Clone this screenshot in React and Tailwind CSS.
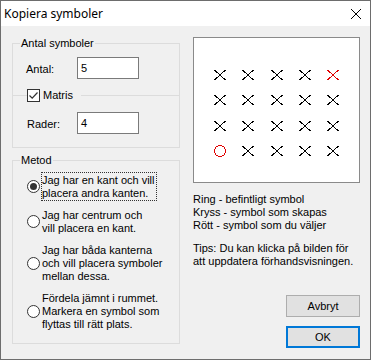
import React from "react";

const font = "font-['Liberation_Sans',Arial,sans-serif] text-[11px] leading-[13px]";

function Checkbox({ checked }) {
  return (
    <span className="w-[13px] h-[13px] border border-[#333] bg-white flex items-center justify-center">
      {checked && (
        <svg width="11" height="11" viewBox="0 0 11 11">
          <path d="M1.5 5.5 L4.2 8.2 L9.5 2.5" fill="none" stroke="#333" strokeWidth="1.2" />
        </svg>
      )}
    </span>
  );
}

function Radio({ checked, focused, lines, className = "" }) {
  return (
    <div className={`flex items-center pl-[14px] ${className}`}>
      <span className="w-[13px] h-[13px] rounded-full border border-[#333] bg-white flex items-center justify-center shrink-0">
        {checked && <span className="w-[7px] h-[7px] rounded-full bg-[#333]" />}
      </span>
      <div
        className={`ml-[1px] border pt-[1px] pr-[1px] ${
          focused ? "border-dotted border-[#333]" : "border-transparent"
        }`}
      >
        {lines.map((l) => (
          <div key={l}>{l}</div>
        ))}
      </div>
    </div>
  );
}

function Field({ value }) {
  return (
    <div className="w-[62px] h-[22px] border border-[#7a7a7a] bg-white flex items-center px-[3px]">
      {value}
    </div>
  );
}

function Preview() {
  const cols = [26, 54, 83, 111, 139];
  const rows = [37, 62, 88, 113];
  const marks = [];
  rows.forEach((y, r) =>
    cols.forEach((x, c) => {
      if (r === 3 && c === 0) return;
      const red = r === 0 && c === 4;
      marks.push(
        <g key={`${r}-${c}`} stroke={red ? "#e00000" : "#000"} strokeWidth="1">
          <line x1={x - 5.5} y1={y - 5} x2={x + 5.5} y2={y + 5} />
          <line x1={x + 5.5} y1={y - 5} x2={x - 5.5} y2={y + 5} />
        </g>
      );
    })
  );
  return (
    <div className="w-[167px] h-[146px] border border-[#8a8a8a] bg-white">
      <svg width="165" height="144" shapeRendering="crispEdges">
        {marks}
        <circle cx="26" cy="113" r="5.5" fill="none" stroke="#e00000" strokeWidth="1" />
      </svg>
    </div>
  );
}

export default function App() {
  return (
    <div className={`w-[371px] h-[360px] border border-[#6d6d6d] bg-[#f0f0f0] text-black ${font}`}>
      {/* Title bar */}
      <div className="h-[25px] bg-white flex items-center justify-between pl-[3px] pr-[9px]">
        <span className="font-['Noto_Sans',sans-serif] text-[12px] leading-[16px]">Kopiera symboler</span>
        <svg width="10" height="10" viewBox="0 0 10 10">
          <path d="M0 0 L10 10 M10 0 L0 10" stroke="#000" strokeWidth="1" />
        </svg>
      </div>

      <div className="flex gap-[13px] pl-[11px] pr-[10px] pt-[11px]">
        {/* Left column */}
        <div className="w-[168px] flex flex-col">
          <fieldset className="border border-[#dcdcdc] pb-[13px]">
            <legend className="ml-[7px] px-[1px]">Antal symboler</legend>
            <div className="flex items-center pl-[13px] mt-[7px]">
              <span className="w-[51px] pt-[2px]">Antal:</span>
              <Field value="5" />
            </div>
            <fieldset className="border-t border-[#dcdcdc] mt-[10px]">
              <legend className="ml-[14px] pr-[8px] flex items-center gap-[3px]">
                <Checkbox checked />
                <span>Matris</span>
              </legend>
              <div className="flex items-center pl-[14px] mt-[10px]">
                <span className="w-[50px] pt-[2px]">Rader:</span>
                <Field value="4" />
              </div>
            </fieldset>
          </fieldset>

          <fieldset className="border border-[#dcdcdc] mt-[6px] pb-[11px]">
            <legend className="ml-[7px] px-[1px]">Metod</legend>
            <Radio
              className="mt-[5px]"
              checked
              focused
              lines={["Jag har en kant och vill", "placera andra kanten."]}
            />
            <Radio className="mt-[6px]" lines={["Jag har centrum och", "vill placera en kant."]} />
            <Radio
              className="mt-[6px]"
              lines={["Jag har båda kanterna", "och vill placera symboler", "mellan dessa."]}
            />
            <Radio
              className="mt-[6px]"
              lines={["Fördela jämnt i rummet.", "Markera en symbol som", "flyttas till rätt plats."]}
            />
          </fieldset>
        </div>

        {/* Right column */}
        <div className="w-[167px] flex flex-col">
          <Preview />
          <div className="mt-[10px]">
            <div>Ring - befintligt symbol</div>
            <div>Kryss - symbol som skapas</div>
            <div>Rött - symbol som du väljer</div>
          </div>
          <div className="mt-[10px]">
            <div>Tips: Du kan klicka på bilden för</div>
            <div>att uppdatera förhandsvisningen.</div>
          </div>
          <button className="self-end mt-[27px] w-[74px] h-[22px] border border-[#adadad] bg-[#e1e1e1]">
            Avbryt
          </button>
          <button className="self-end mt-[9px] w-[74px] h-[22px] border-2 border-[#0078d7] bg-[#e1e1e1]">
            OK
          </button>
        </div>
      </div>
    </div>
  );
}
